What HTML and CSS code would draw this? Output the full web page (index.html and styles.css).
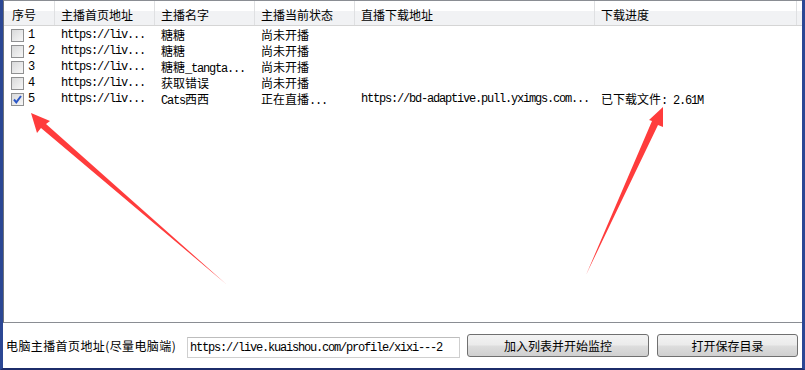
FILE: index.html
```html
<!DOCTYPE html>
<html lang="zh-CN">
<head>
    <meta charset="UTF-8">
    <title>直播监控录制</title>
    <link rel="stylesheet" href="styles.css">
</head>
<body>
    <div class="window">
        <div class="list">
            <div class="head">
                <div class="hcell first">序号</div>
                <div class="hcell">主播首页地址</div>
                <div class="hcell">主播名字</div>
                <div class="hcell">主播当前状态</div>
                <div class="hcell">直播下载地址</div>
                <div class="hcell">下载进度</div>
                <div class="hcell filler"></div>
            </div>
            <div class="rows">
                <div class="row">
                    <div class="cell first"><span class="check"></span><span class="mono">1</span></div>
                    <div class="cell mono">https://liv...</div>
                    <div class="cell">糖糖</div>
                    <div class="cell">尚未开播</div>
                    <div class="cell"></div>
                    <div class="cell"></div>
                </div>
                <div class="row">
                    <div class="cell first"><span class="check"></span><span class="mono">2</span></div>
                    <div class="cell mono">https://liv...</div>
                    <div class="cell">糖糖</div>
                    <div class="cell">尚未开播</div>
                    <div class="cell"></div>
                    <div class="cell"></div>
                </div>
                <div class="row">
                    <div class="cell first"><span class="check"></span><span class="mono">3</span></div>
                    <div class="cell mono">https://liv...</div>
                    <div class="cell">糖糖<span class="mono">_tangta...</span></div>
                    <div class="cell">尚未开播</div>
                    <div class="cell"></div>
                    <div class="cell"></div>
                </div>
                <div class="row">
                    <div class="cell first"><span class="check"></span><span class="mono">4</span></div>
                    <div class="cell mono">https://liv...</div>
                    <div class="cell">获取错误</div>
                    <div class="cell">尚未开播</div>
                    <div class="cell"></div>
                    <div class="cell"></div>
                </div>
                <div class="row">
                    <div class="cell first">
                        <span class="check checked">
                            <svg viewBox="0 0 11 11" width="11" height="11"><path d="M2 5.5 L4.3 8.3 L9 2" fill="none" stroke="#2a56c6" stroke-width="2"/></svg>
                        </span><span class="mono">5</span>
                    </div>
                    <div class="cell mono">https://liv...</div>
                    <div class="cell"><span class="mono">Cats</span>西西</div>
                    <div class="cell">正在直播<span class="mono">...</span></div>
                    <div class="cell mono">https://bd-adaptive.pull.yximgs.com...</div>
                    <div class="cell">已下载文件<span class="mono">: 2.61M</span></div>
                </div>
            </div>
        </div>
        <div class="bar">
            <span class="label">电脑主播首页地址(尽量电脑端)</span>
            <input class="url" type="text" value="https://live.kuaishou.com/profile/xixi---2">
            <button class="btn btn-add">加入列表并开始监控</button>
            <button class="btn btn-open">打开保存目录</button>
        </div>

        <!-- 标注箭头 -->
        <svg class="arrows" width="805" height="370" viewBox="0 0 805 370">
            <polygon points="31,113 50,121 46,124 226,284 41,128 37,133" fill="#ff3c3c"/>
            <polygon points="663,107 663,127 658,125 586,275 652,121 649,120" fill="#ff3c3c"/>
        </svg>
    </div>
</body>
</html>
```

FILE: styles.css
```css
*{margin: 0; padding: 0; box-sizing: border-box;}
body{ width: 805px; height: 370px; overflow: hidden; background: #fff; font: 12px "Noto Sans CJK SC", "Liberation Sans", sans-serif; color: #000; }
.window{ position: relative; width: 805px; height: 370px; border-left: 3px solid #2b4794; border-right: 3px solid #2b4794; border-bottom: 2px solid #1c2c6a; background: #fff; }

.list{ height: 323px; border-top: 1px solid #8a8d93; border-left: 1px solid #6f737a; border-bottom: 1px solid #8a8d93; overflow: hidden; }
.head, .row{ display: grid; grid-template-columns: 51px 100px 100px 100px 240px 202px 1fr; }
.head{ height: 25px; border-bottom: 1px solid #d5d5d5; background: linear-gradient(#fff 0, #fff 40%, #f1f2f4 40%, #f1f2f4 100%); }
.hcell{ padding: 4px 0 0 6px; line-height: 20px; border-right: 1px solid #dfe0e2; white-space: nowrap; }
.hcell.first{ padding-left: 8px; }
.hcell.filler{ border-right: none; }

.rows{ padding-top: 1px; }
.row{ height: 16px; line-height: 16px; }
.cell{ padding-left: 6px; white-space: nowrap; overflow: hidden; }
.cell.first{ padding-left: 7px; display: flex; align-items: center; }
.mono{ font-family: "Liberation Mono", monospace; font-size: 12px; letter-spacing: -1.2px; }

.check{ display: inline-flex; align-items: center; justify-content: center; width: 13px; height: 13px; margin-right: 4px; border: 1px solid #8f9091; background: linear-gradient(135deg, #d8d9da, #f7f7f7); }

.bar{ display: flex; align-items: center; height: 45px; padding-left: 3px; }
.label{ width: 181px; white-space: nowrap; letter-spacing: 0.4px; }
.url{ width: 273px; height: 21px; margin-top: 4px; padding-left: 2px; border: 1px solid #cfcfcf; border-top-color: #bdbdbd; background: #fff; font: 12px "Liberation Mono", monospace; letter-spacing: -1.2px; color: #000; outline: none; }
.btn{ height: 23px; border: 1px solid #707070; border-radius: 3px; background: linear-gradient(#f3f3f3 0, #ebebeb 48%, #dddddd 52%, #d0d0d0 100%); font: 12px "Noto Sans CJK SC", sans-serif; color: #000; }
.btn-add{ width: 182px; margin-left: 7px; }
.btn-open{ width: 141px; margin-left: 8px; }

.arrows{ position: absolute; left: -3px; top: 0; pointer-events: none; }
```
